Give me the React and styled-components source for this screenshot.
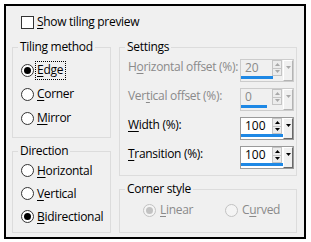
import React from 'react';
import styled, { createGlobalStyle } from 'styled-components';

const GlobalStyle = createGlobalStyle`
  html, body {
    margin: 0;
    background: #fff;
  }
  body {
    font-family: "Open Sans", "Noto Sans", sans-serif;
    font-size: 12px;
    color: #000;
  }
`;

const Frame = styled.div`
  box-sizing: border-box;
  width: 302px;
  height: 235px;
  margin: 4px 0 0 4px;
  border: 2px solid #000;
  background: #f0f0f0;
  padding: 8px 6px 0 6px;
`;

const Text = styled.span`
  line-height: 16px;
  letter-spacing: -0.3px;
  white-space: nowrap;
  color: ${(p) => (p.$disabled ? '#8a8a8a' : '#000')};
  u {
    text-decoration-thickness: 1px;
    text-underline-offset: 2px;
  }
`;

const Focus = styled(Text)`
  display: inline-block;
  box-sizing: border-box;
  height: 17px;
  padding: 0 2px 0 1px;
  margin-left: -1px;
  outline: 1px dotted #000;
  outline-offset: 0;
`;

const CheckRow = styled.div`
  display: flex;
  align-items: center;
  gap: 3px;
  height: 16px;
  padding-left: 9px;
`;

const CheckBox = styled.span`
  box-sizing: border-box;
  width: 13px;
  height: 13px;
  border: 1px solid #333;
  background: #fff;
`;

const Columns = styled.div`
  display: grid;
  grid-template-columns: 99px 178px;
  column-gap: 8px;
  margin-top: 9px;
`;

const Column = styled.div`
  display: flex;
  flex-direction: column;
  gap: 5px;
`;

const Group = styled.fieldset`
  box-sizing: border-box;
  height: ${(p) => p.$h}px;
  margin: 0;
  padding: 0;
  min-width: 0;
  border: 1px solid #dcdcdc;
`;

const Legend = styled.legend`
  margin-left: 5px;
  padding: 0 2px;
  line-height: 16px;
  letter-spacing: -0.3px;
`;

const RadioList = styled.div`
  display: flex;
  flex-direction: column;
  padding: ${(p) => p.$top}px 0 0 8px;
`;

const RadioRow = styled.div`
  display: flex;
  align-items: center;
  gap: 3px;
  height: ${(p) => p.$h}px;
`;

const Circle = styled.span`
  box-sizing: border-box;
  width: 13px;
  height: 13px;
  border-radius: 50%;
  border: 1px solid ${(p) => (p.$disabled ? '#c2c2c2' : '#333')};
  background: ${(p) => (p.$disabled ? '#f4f4f4' : '#fff')};
  display: flex;
  align-items: center;
  justify-content: center;
  flex: none;
`;

const Dot = styled.span`
  width: 7px;
  height: 7px;
  border-radius: 50%;
  background: ${(p) => (p.$disabled ? '#c2c2c2' : '#000')};
`;

const Radio = ({ checked, disabled, focus, children, h = 24 }) => {
  const Label = focus ? Focus : Text;
  return (
    <RadioRow $h={h}>
      <Circle $disabled={disabled}>{checked && <Dot $disabled={disabled} />}</Circle>
      <Label $disabled={disabled}>{children}</Label>
    </RadioRow>
  );
};

const SettingsList = styled.div`
  display: flex;
  flex-direction: column;
  gap: 6px;
  padding: 4px 2px 0 8px;
`;

const SettingRow = styled.div`
  display: flex;
  align-items: flex-start;
  justify-content: space-between;
  height: 23px;
  & > span {
    margin-top: 0;
  }
`;

const Field = styled.div`
  position: relative;
  box-sizing: border-box;
  width: 54px;
  height: 23px;
  display: flex;
  border: 1px solid ${(p) => (p.$disabled ? '#cccccc' : '#9a9a9a')};
  background: ${(p) => (p.$disabled ? '#f0f0f0' : '#fff')};
`;

const FieldText = styled.div`
  flex: 1;
  padding-left: 4px;
  line-height: 16px;
  color: ${(p) => (p.$disabled ? '#8a8a8a' : '#000')};
`;

const Spin = styled.div`
  box-sizing: border-box;
  width: 10px;
  height: 16px;
  display: flex;
  flex-direction: column;
  border: 1px solid #c4c4c4;
  background: #ececec;
`;

const SpinHalf = styled.div`
  flex: 1;
  display: flex;
  align-items: center;
  justify-content: center;
  & + & {
    border-top: 1px solid #c4c4c4;
  }
`;

const Drop = styled.div`
  box-sizing: border-box;
  width: 10px;
  margin-left: 1px;
  display: flex;
  justify-content: center;
  padding-top: 5px;
  background: #f0f0f0;
  border-top: 1px solid #fff;
  border-left: 1px solid #fff;
  border-right: 1px solid ${(p) => (p.$disabled ? '#b4b4b4' : '#696969')};
  border-bottom: 1px solid ${(p) => (p.$disabled ? '#b4b4b4' : '#696969')};
`;

const Bar = styled.div`
  position: absolute;
  left: 0;
  bottom: 2px;
  height: 3px;
  background: #1e88e5;
`;

const Arrow = ({ up, color }) => (
  <svg width="5" height="3" viewBox="0 0 5 3">
    <path d={up ? 'M2.5 0 L5 3 L0 3 Z' : 'M0 0 L5 0 L2.5 3 Z'} fill={color} />
  </svg>
);

const SpinField = ({ value, bar, disabled }) => {
  const color = disabled ? '#a8a8a8' : '#000';
  return (
    <Field $disabled={disabled}>
      <FieldText $disabled={disabled}>{value}</FieldText>
      <Spin>
        <SpinHalf><Arrow up color={color} /></SpinHalf>
        <SpinHalf><Arrow color={color} /></SpinHalf>
      </Spin>
      <Drop $disabled={disabled}><Arrow color={color} /></Drop>
      <Bar style={{ width: bar }} />
    </Field>
  );
};

const CornerRow = styled.div`
  display: grid;
  grid-template-columns: 82px 1fr;
  padding: 4px 0 0 23px;
  & > div {
    gap: 4px;
  }
`;

const settings = [
  { label: <>H<u>o</u>rizontal offset (%):</>, value: '20', bar: 32, disabled: true },
  { label: <>Ver<u>t</u>ical offset (%):</>, value: '0', bar: 26, disabled: true },
  { label: <><u>W</u>idth (%):</>, value: '100', bar: 42 },
  { label: <><u>T</u>ransition (%):</>, value: '100', bar: 42 },
];

export default function App() {
  return (
    <>
      <GlobalStyle />
      <Frame>
        <CheckRow>
          <CheckBox />
          <Text><u>S</u>how tiling preview</Text>
        </CheckRow>
        <Columns>
          <Column>
            <Group $h={99}>
              <Legend>Tiling method</Legend>
              <RadioList $top={3}>
                <Radio checked focus><u>E</u>dge</Radio>
                <Radio><u>C</u>orner</Radio>
                <Radio><u>M</u>irror</Radio>
              </RadioList>
            </Group>
            <Group $h={90}>
              <Legend>Direction</Legend>
              <RadioList $top={0}>
                <Radio h={23}><u>H</u>orizontal</Radio>
                <Radio h={23}><u>V</u>ertical</Radio>
                <Radio h={23} checked><u>B</u>idirectional</Radio>
              </RadioList>
            </Group>
          </Column>
          <Column>
            <Group $h={137}>
              <Legend>Settings</Legend>
              <SettingsList>
                {settings.map((s, i) => (
                  <SettingRow key={i}>
                    <Text $disabled={s.disabled}>{s.label}</Text>
                    <SpinField value={s.value} bar={s.bar} disabled={s.disabled} />
                  </SettingRow>
                ))}
              </SettingsList>
            </Group>
            <Group $h={52}>
              <Legend>Corner style</Legend>
              <CornerRow>
                <Radio h={18} checked disabled><u>L</u>inear</Radio>
                <Radio h={18} disabled>C<u>u</u>rved</Radio>
              </CornerRow>
            </Group>
          </Column>
        </Columns>
      </Frame>
    </>
  );
}
